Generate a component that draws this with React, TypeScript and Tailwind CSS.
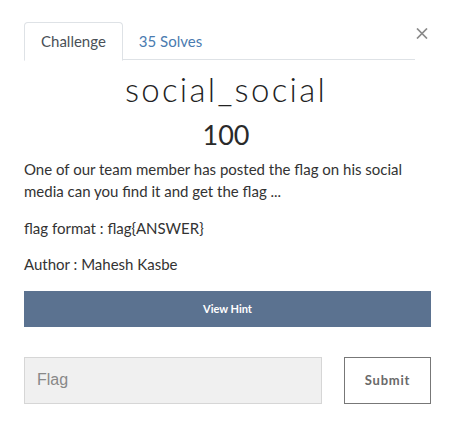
export default function App() {
  return (
    <div className="w-[452px] h-[438px] bg-white px-6 pt-[22px] text-[#333] font-['Lato','Liberation_Sans',sans-serif]">
      {/* tabs */}
      <div className="flex items-start">
        <div className="flex flex-1 border-b border-[#dee2e6] h-[38px]">
          <div className="-mb-px px-4 h-[39px] flex items-center border border-b-white border-[#dee2e6] rounded-t bg-white text-[15px] text-[#495057]">
            Challenge
          </div>
          <div className="px-4 h-[38px] flex items-center text-[15px] text-[#4a7bb0]">
            35 Solves
          </div>
        </div>
        <button className="mt-[6px] w-[13px] h-[11px] flex items-center justify-center">
          <svg width="12" height="11" viewBox="0 0 12 11">
            <path d="M1 0.5 L11 10.5 M11 0.5 L1 10.5" stroke="#8a8a8a" strokeWidth="1.7" />
          </svg>
        </button>
      </div>

      {/* title */}
      <h2 className="mt-[10px] text-center text-[33px] leading-[1.2] font-light tracking-[0.07em] text-[#222]">
        social_social
      </h2>
      <h3 className="mt-[9px] text-center text-[27px] leading-[1.2] text-[#2a2a2a]">100</h3>

      {/* description */}
      <div className="mt-[7px] text-[15px] leading-[22.5px]">
        <p className="mb-[14px]">
          One of our team member has posted the flag on his social
          <br />
          media can you find it and get the flag ...
        </p>
        <p className="mb-[14px]">flag format : flag{"{"}ANSWER{"}"}</p>
        <p>Author : Mahesh Kasbe</p>
      </div>

      <button className="mt-[15px] w-[407px] h-9 bg-[#5b7290] text-white text-[11px] font-bold">
        View Hint
      </button>

      <div className="mt-[30px] flex w-[407px] justify-between">
        <div className="w-[298px] h-[47px] bg-[#f0f0f0] border border-[#d6d6d6] flex items-center pl-3 text-[16px] text-[#888] font-['Liberation_Sans',sans-serif]">
          Flag
        </div>
        <button className="w-[87px] h-[47px] border border-[#777] bg-white text-[13px] font-bold tracking-[0.06em] text-[#6a6a6a]">
          Submit
        </button>
      </div>
    </div>
  );
}
